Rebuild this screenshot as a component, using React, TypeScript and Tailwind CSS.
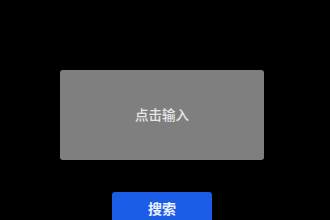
import React from 'react';

const font = { fontFamily: '"Noto Sans CJK SC", "Noto Sans", sans-serif' };

export default function App() {
  return (
    <div className="w-[330px] h-[220px] bg-black overflow-hidden flex flex-col items-center pt-[70px] pr-[6px]" style={font}>
      <div className="w-[204px] h-[90px] shrink-0 rounded-[3px] bg-[#7f7f7f] flex items-center justify-center">
        <span className="text-[13.5px] font-medium text-[#e6e6e6] leading-none">点击输入</span>
      </div>
      <button className="mt-[32px] w-[100px] h-[32px] shrink-0 rounded-[3px] bg-[#1b5de6] flex items-center justify-center">
        <span className="text-[14px] font-bold text-[#eef2ff] leading-none">搜索</span>
      </button>
    </div>
  );
}
